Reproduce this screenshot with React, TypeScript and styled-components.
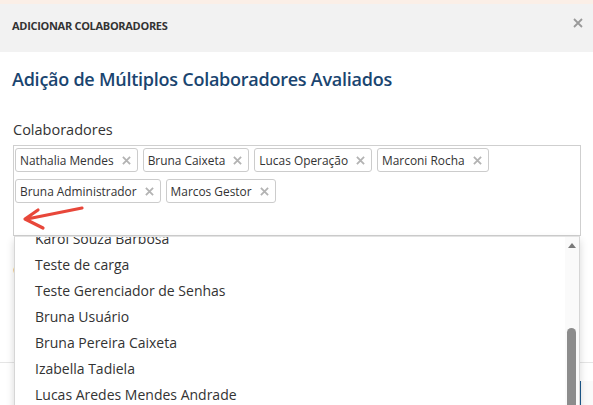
import React from "react";
import styled, { createGlobalStyle } from "styled-components";

const Global = createGlobalStyle`
  html, body { margin: 0; padding: 0; background: #fff; overflow: hidden; }
  body { font-family: "Open Sans", "Noto Sans", sans-serif; color: #333; width: 593px; height: 405px; }
  * { box-sizing: border-box; }
`;

const Page = styled.div`
  width: 593px;
  height: 405px;
  overflow: hidden;
  display: flex;
  flex-direction: column;
`;

const TopStrip = styled.div`
  height: 4px;
  background: #fbefe7;
  flex: none;
`;

const Modal = styled.div`
  width: 640px;
  display: flex;
  flex-direction: column;
  background: #fff;
`;

const Header = styled.div`
  height: 48px;
  background: #f2f2f2;
  display: flex;
  align-items: center;
  padding: 0 10px 6px 12px;
  position: relative;
`;

const HeaderTitle = styled.div`
  font-size: 11px;
  font-weight: 700;
  color: #333;
  letter-spacing: -0.3px;
  flex: 1;
`;

const CloseBtn = styled.div`
  position: absolute;
  left: 573px;
  top: 14px;
  width: 10px;
  height: 10px;
  display: flex;
`;

const Body = styled.div`
  padding: 15px 12px 0 13px;
  display: flex;
  flex-direction: column;
`;

const Heading = styled.h4`
  margin: 0 0 0 -1px;
  font-size: 18px;
  font-weight: 600;
  letter-spacing: -0.25px;
  color: #1a4570;
  line-height: 24px;
`;

const FieldLabel = styled.label`
  display: block;
  font-size: 14.5px;
  color: #333;
  line-height: 20px;
  margin-top: 29px;
  margin-bottom: 5px;
`;

const SelectWrap = styled.div`
  position: relative;
  width: 568px;
`;

const SelectBox = styled.div`
  border: 1px solid #cfcfcf;
  height: 91px;
  padding: 2px 1px;
  display: flex;
  flex-wrap: wrap;
  align-content: flex-start;
  gap: 7px 5px;
`;

const Tag = styled.div`
  height: 24px;
  border: 1px solid #cccccc;
  border-radius: 3px;
  background: #fff;
  display: flex;
  align-items: center;
  padding: 0 6px 0 4px;
  font-size: 11.9px;
  color: #333;
  gap: 8px;
  white-space: nowrap;
`;

const RemoveIcon = styled.svg`
  display: block;
  flex: none;
`;

const ArrowNote = styled.svg`
  position: absolute;
  left: 0;
  top: 0;
  width: 100px;
  height: 100px;
  overflow: visible;
  z-index: 6;
`;

const Dropdown = styled.div`
  position: absolute;
  left: 1px;
  top: 91px;
  width: 566px;
  height: 200px;
  background: #fff;
  border: 1px solid #d6d6d6;
  border-top-color: #e3e3e3;
  box-shadow: 0 4px 8px rgba(0, 0, 0, 0.16);
  overflow: hidden;
  z-index: 5;
  display: flex;
`;

const OptionList = styled.ul`
  list-style: none;
  margin: -11px 0 0 0;
  padding: 0;
  flex: 1;
`;

const Option = styled.li`
  height: 26px;
  line-height: 26px;
  padding-left: 20px;
  font-size: 14px;
  color: #333;
`;

const ScrollTrack = styled.div`
  width: 14px;
  background: #fafafa;
  display: flex;
  flex-direction: column;
  align-items: center;
  padding-top: 6px;
  position: relative;
`;

const ScrollUp = styled.div`
  width: 0;
  height: 0;
  border-left: 4px solid transparent;
  border-right: 4px solid transparent;
  border-bottom: 5px solid #7a7a7a;
`;

const ScrollThumb = styled.div`
  position: absolute;
  left: 2px;
  top: 91px;
  width: 9px;
  height: 120px;
  border-radius: 5px;
  background: #8c8c8c;
`;

const SecondLabel = styled.label`
  display: block;
  font-size: 14px;
  color: #333;
  line-height: 20px;
  margin-top: 24px;
`;

const Footer = styled.div`
  margin-top: 82px;
  border-top: 1px solid #e5e5e5;
  padding: 18px 0 0 579px;
  display: flex;
`;

const SaveButton = styled.button`
  height: 34px;
  width: 80px;
  border: none;
  border-left: 2px solid #1d5a8e;
  background: #fafafa;
  font-family: inherit;
  font-size: 14px;
  color: #1d5a8e;
  padding-left: 30px;
  text-align: left;
`;

const X = ({ size, color, w }: { size: number; color: string; w: number }) => (
  <RemoveIcon viewBox="0 0 10 10" width={size} height={size}>
    <path d="M1 1 L9 9 M9 1 L1 9" stroke={color} strokeWidth={w} />
  </RemoveIcon>
);

const tags = [
  "Nathalia Mendes",
  "Bruna Caixeta",
  "Lucas Operação",
  "Marconi Rocha",
  "Bruna Administrador",
  "Marcos Gestor",
];

const options = [
  "Karol Souza Barbosa",
  "Teste de carga",
  "Teste Gerenciador de Senhas",
  "Bruna Usuário",
  "Bruna Pereira Caixeta",
  "Izabella Tadiela",
  "Lucas Aredes Mendes Andrade",
  "Marcos Silva",
];

export default function App() {
  return (
    <Page>
      <Global />
      <TopStrip />
      <Modal>
        <Header>
          <HeaderTitle>ADICIONAR COLABORADORES</HeaderTitle>
          <CloseBtn>
            <X size={10} color="#9a9a9a" w={1.8} />
          </CloseBtn>
        </Header>
        <Body>
          <Heading>Adição de Múltiplos Colaboradores Avaliados</Heading>
          <FieldLabel>Colaboradores</FieldLabel>
          <SelectWrap>
            <SelectBox>
              {tags.map((t) => (
                <Tag key={t}>
                  {t}
                  <X size={9} color="#b3b3b3" w={2} />
                </Tag>
              ))}
            </SelectBox>
            <ArrowNote viewBox="0 0 100 100">
              <path
                d="M69 63 L14 74 M25 65 L12 74 L30 83"
                stroke="#e8473a"
                strokeWidth={3.2}
                fill="none"
                strokeLinecap="round"
                strokeLinejoin="round"
              />
            </ArrowNote>
            <Dropdown>
              <OptionList>
                {options.map((o) => (
                  <Option key={o}>{o}</Option>
                ))}
              </OptionList>
              <ScrollTrack>
                <ScrollUp />
                <ScrollThumb />
              </ScrollTrack>
            </Dropdown>
          </SelectWrap>
          <SecondLabel>Cargo</SecondLabel>
        </Body>
        <Footer>
          <SaveButton>Salvar</SaveButton>
        </Footer>
      </Modal>
    </Page>
  );
}
